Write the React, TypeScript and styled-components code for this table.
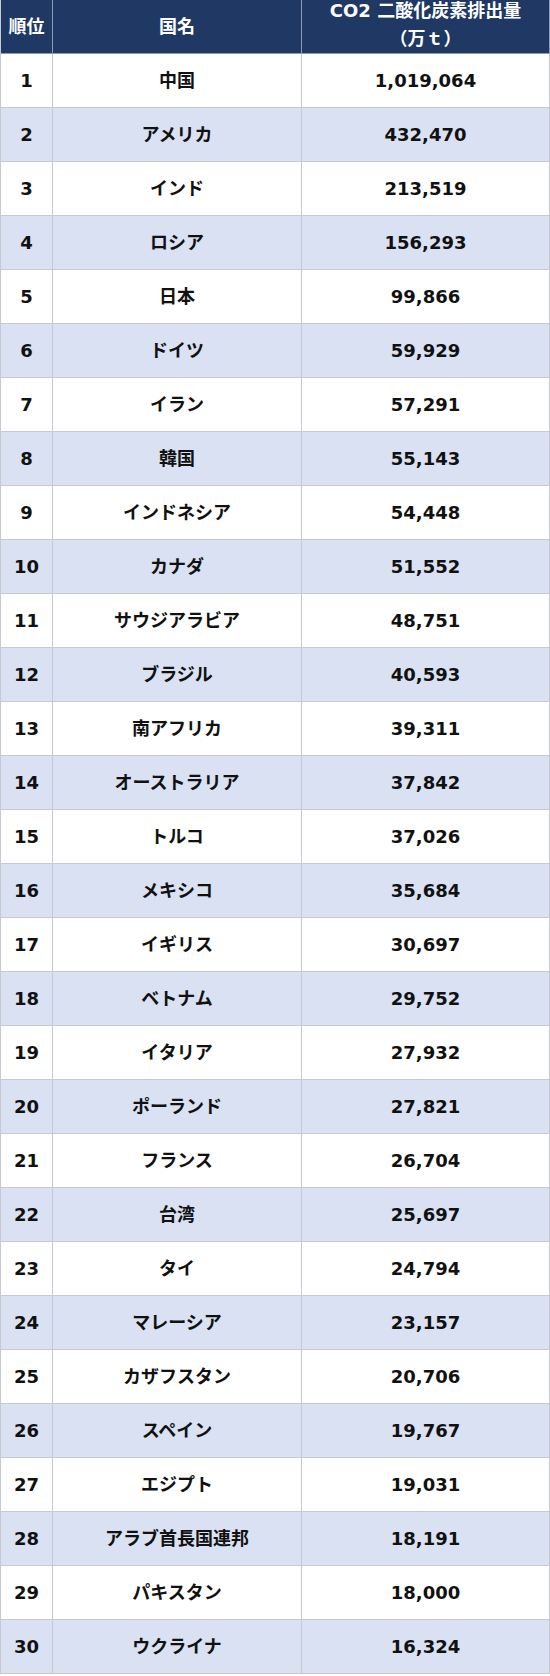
import React from "react";
import styled, { createGlobalStyle } from "styled-components";

const GlobalStyle = createGlobalStyle`
  html, body { margin: 0; padding: 0; background: #ffffff; }
  body { font-family: "DejaVu Sans", "Noto Sans CJK JP", sans-serif; }
`;

const Table = styled.div`
  width: 550px;
  display: flex;
  flex-direction: column;
  border-left: 1px solid #c6c9d0;
  box-sizing: border-box;
  font-family: "DejaVu Sans", "Noto Sans CJK JP", sans-serif;
  font-weight: 700;
  font-size: 18px;
`;

const Row = styled.div<{ $alt?: boolean; $head?: boolean }>`
  display: grid;
  grid-template-columns: 52px 249px 248px;
  height: 54px;
  background: ${(p) => (p.$head ? "#1f3864" : p.$alt ? "#d9e1f2" : "#ffffff")};
  color: ${(p) => (p.$head ? "#ffffff" : "#111111")};
`;

const Cell = styled.div<{ $head?: boolean }>`
  box-sizing: border-box;
  display: flex;
  align-items: center;
  justify-content: center;
  text-align: center;
  border-right: 1px solid ${(p) => (p.$head ? "#8e9ab3" : "#c6c9d0")};
  border-bottom: 1px solid ${(p) => (p.$head ? "#8e9ab3" : "#c6c9d0")};
  line-height: ${(p) => (p.$head ? "28px" : "22px")};
  white-space: nowrap;
`;

const HeadLines = styled.div`
  display: flex;
  flex-direction: column;
  align-items: center;
  margin-top: -3px;
`;

const data: [string, string][] = [
  ["中国", "1,019,064"],
  ["アメリカ", "432,470"],
  ["インド", "213,519"],
  ["ロシア", "156,293"],
  ["日本", "99,866"],
  ["ドイツ", "59,929"],
  ["イラン", "57,291"],
  ["韓国", "55,143"],
  ["インドネシア", "54,448"],
  ["カナダ", "51,552"],
  ["サウジアラビア", "48,751"],
  ["ブラジル", "40,593"],
  ["南アフリカ", "39,311"],
  ["オーストラリア", "37,842"],
  ["トルコ", "37,026"],
  ["メキシコ", "35,684"],
  ["イギリス", "30,697"],
  ["ベトナム", "29,752"],
  ["イタリア", "27,932"],
  ["ポーランド", "27,821"],
  ["フランス", "26,704"],
  ["台湾", "25,697"],
  ["タイ", "24,794"],
  ["マレーシア", "23,157"],
  ["カザフスタン", "20,706"],
  ["スペイン", "19,767"],
  ["エジプト", "19,031"],
  ["アラブ首長国連邦", "18,191"],
  ["パキスタン", "18,000"],
  ["ウクライナ", "16,324"],
];

export default function App() {
  return (
    <>
      <GlobalStyle />
      <Table>
        <Row $head>
          <Cell $head>順位</Cell>
          <Cell $head>国名</Cell>
          <Cell $head>
            <HeadLines>
              <span>CO2 二酸化炭素排出量</span>
              <span>（万ｔ）</span>
            </HeadLines>
          </Cell>
        </Row>
        {data.map(([name, value], i) => (
          <Row key={i} $alt={i % 2 === 1}>
            <Cell>{i + 1}</Cell>
            <Cell>{name}</Cell>
            <Cell>{value}</Cell>
          </Row>
        ))}
      </Table>
    </>
  );
}
